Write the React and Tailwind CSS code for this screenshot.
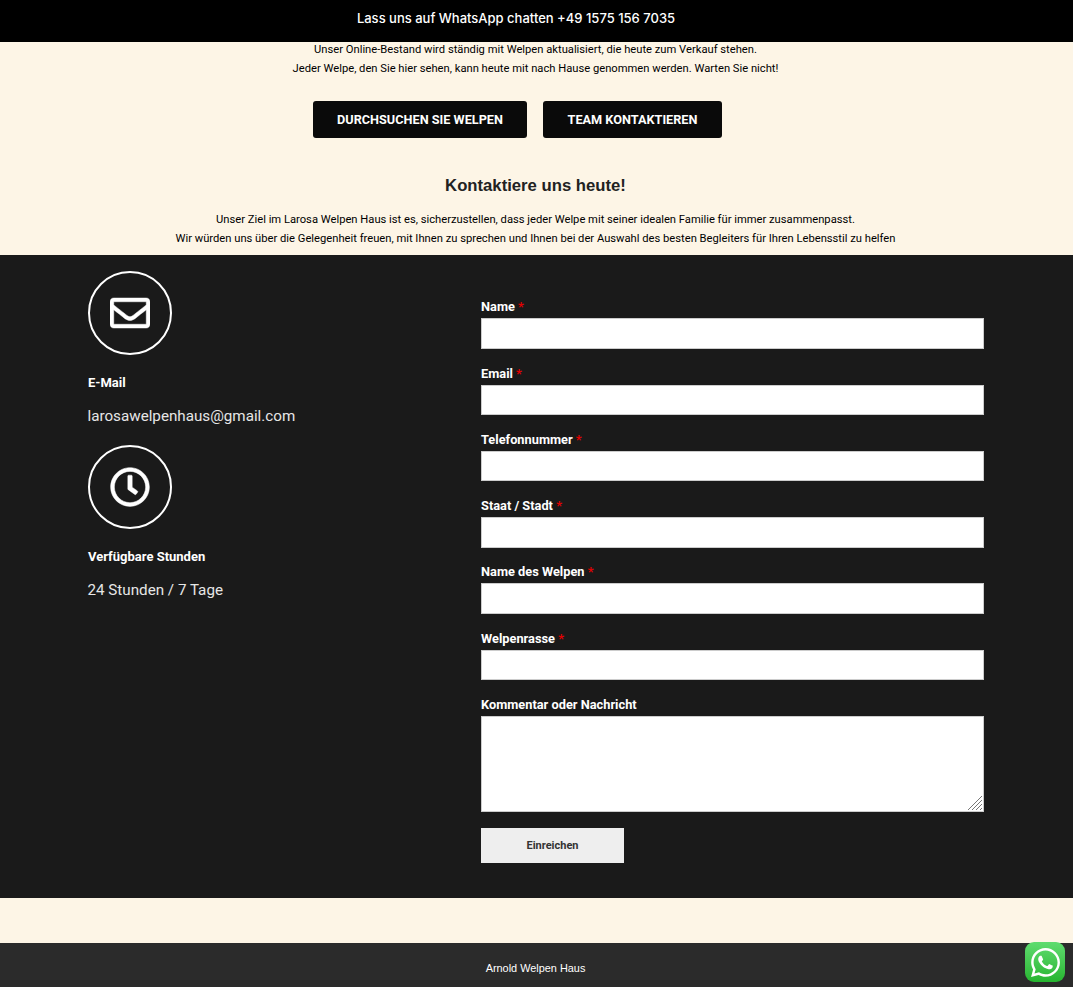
import { FaRegEnvelope, FaRegClock, FaWhatsapp } from "react-icons/fa";

const fields = [
  { label: "Name", type: "text" },
  { label: "Email", type: "email" },
  { label: "Telefonnummer", type: "tel" },
  { label: "Staat / Stadt", type: "text" },
  { label: "Name des Welpen", type: "text" },
  { label: "Welpenrasse", type: "text" },
];

function InfoBlock({ icon, title, text }) {
  return (
    <div className="flex flex-col">
      <div className="w-[84px] h-[84px] rounded-full border-2 border-white flex items-center justify-center text-white text-[40px]">
        {icon}
      </div>
      <h4 className="mt-[18px] text-[13px] leading-[19px] font-bold text-white">{title}</h4>
      <p className="mt-[14px] -ml-[0.5px] text-[15.2px] leading-[20px] text-[#e6e6e6]">{text}</p>
    </div>
  );
}

export default function App() {
  return (
    <div className="min-h-[987px] bg-[#fdf5e6] font-['Roboto',sans-serif] relative overflow-hidden">
      <div className="h-[42px] bg-black flex items-center justify-center pr-[41px] pb-[5px]">
        <a className="text-white text-[13px] font-medium font-['Inter',sans-serif]">
          Lass uns auf WhatsApp chatten +49 1575 156 7035
        </a>
      </div>

      <section className="h-[213px] flex flex-col items-center pr-[2px] pt-0 text-black">
        <div className="-mt-[2px] text-[11.2px] leading-[19px] text-center">
          <p className="">Unser Online-Bestand wird ständig mit Welpen aktualisiert, die heute zum Verkauf stehen.</p>
          <p className="">Jeder Welpe, den Sie hier sehen, kann heute mit nach Hause genommen werden. Warten Sie nicht!</p>
        </div>
        <div className="mt-[23px] flex gap-4 mr-[36px]">
          <button className="w-[214px] h-[37px] rounded-[3px] bg-[#0a0a0a] text-white text-[12.7px] font-bold">
            DURCHSUCHEN SIE WELPEN
          </button>
          <button className="w-[179px] h-[37px] rounded-[3px] bg-[#0a0a0a] text-white text-[12.7px] font-bold">
            TEAM KONTAKTIEREN
          </button>
        </div>
        <h2 className="mt-[37px] text-[16.7px] leading-[22px] font-bold text-[#222] font-['Liberation_Sans',sans-serif]">
          Kontaktiere uns heute!
        </h2>
        <div className="mt-[13px] text-[11.2px] leading-[19px] text-center">
          <p className="">Unser Ziel im Larosa Welpen Haus ist es, sicherzustellen, dass jeder Welpe mit seiner idealen Familie für immer zusammenpasst.</p>
          <p className="">Wir würden uns über die Gelegenheit freuen, mit Ihnen zu sprechen und Ihnen bei der Auswahl des besten Begleiters für Ihren Lebensstil zu helfen</p>
        </div>
      </section>

      <section className="h-[643px] bg-[#1a1a1a] flex">
        <div className="w-[481px] pl-[88px] pt-[16px] flex flex-col gap-[19px]">
          <InfoBlock icon={<FaRegEnvelope strokeWidth={6} />} title="E-Mail" text="larosawelpenhaus@gmail.com" />
          <InfoBlock icon={<FaRegClock strokeWidth={6} />} title="Verfügbare Stunden" text="24 Stunden / 7 Tage" />
        </div>

        <form className="w-[503px] pt-[42.3px] flex flex-col">
          {fields.map((f) => (
            <div key={f.label} className="h-[66.25px] flex flex-col">
              <label className="h-[21px] text-[12.8px] leading-[20px] font-bold text-white">
                {f.label} <span className="text-[#e00000]">*</span>
              </label>
              <input type={f.type} className="h-[30.5px] w-full bg-white border border-[#ccc]" />
            </div>
          ))}
          <div className="flex flex-col">
            <label className="h-[21px] text-[12.8px] leading-[20px] font-bold text-white">Kommentar oder Nachricht</label>
            <div className="relative h-[96px]">
              <textarea className="h-[96px] w-full bg-white border border-[#ccc] block resize-none"></textarea>
              <svg className="absolute right-[2px] bottom-[2px]" width="14" height="14" viewBox="0 0 14 14" stroke="#777" strokeWidth="1">
                <path d="M0 14L14 0M4 14L14 4M8 14L14 8M12 14L14 12" />
              </svg>
            </div>
          </div>
          <button type="button" className="mt-[16px] w-[143px] h-[35px] pt-[1px] bg-[#eeeeee] text-[#333] text-[11px] font-bold">
            Einreichen
          </button>
        </form>
      </section>

      <div className="h-[45px]"></div>

      <footer className="h-[44px] bg-[#2b2b2b] flex items-center justify-center pr-[2px] pt-[6px]">
        <p className="text-white text-[10.9px] font-['Liberation_Sans',sans-serif]">Arnold Welpen Haus</p>
      </footer>

      <div className="absolute left-[1025px] top-[942px] w-[40px] h-[40px] rounded-[9px] bg-gradient-to-b from-[#5fdc6f] to-[#25b52f] flex items-center justify-center text-white text-[33px]">
        <FaWhatsapp />
      </div>
    </div>
  );
}
